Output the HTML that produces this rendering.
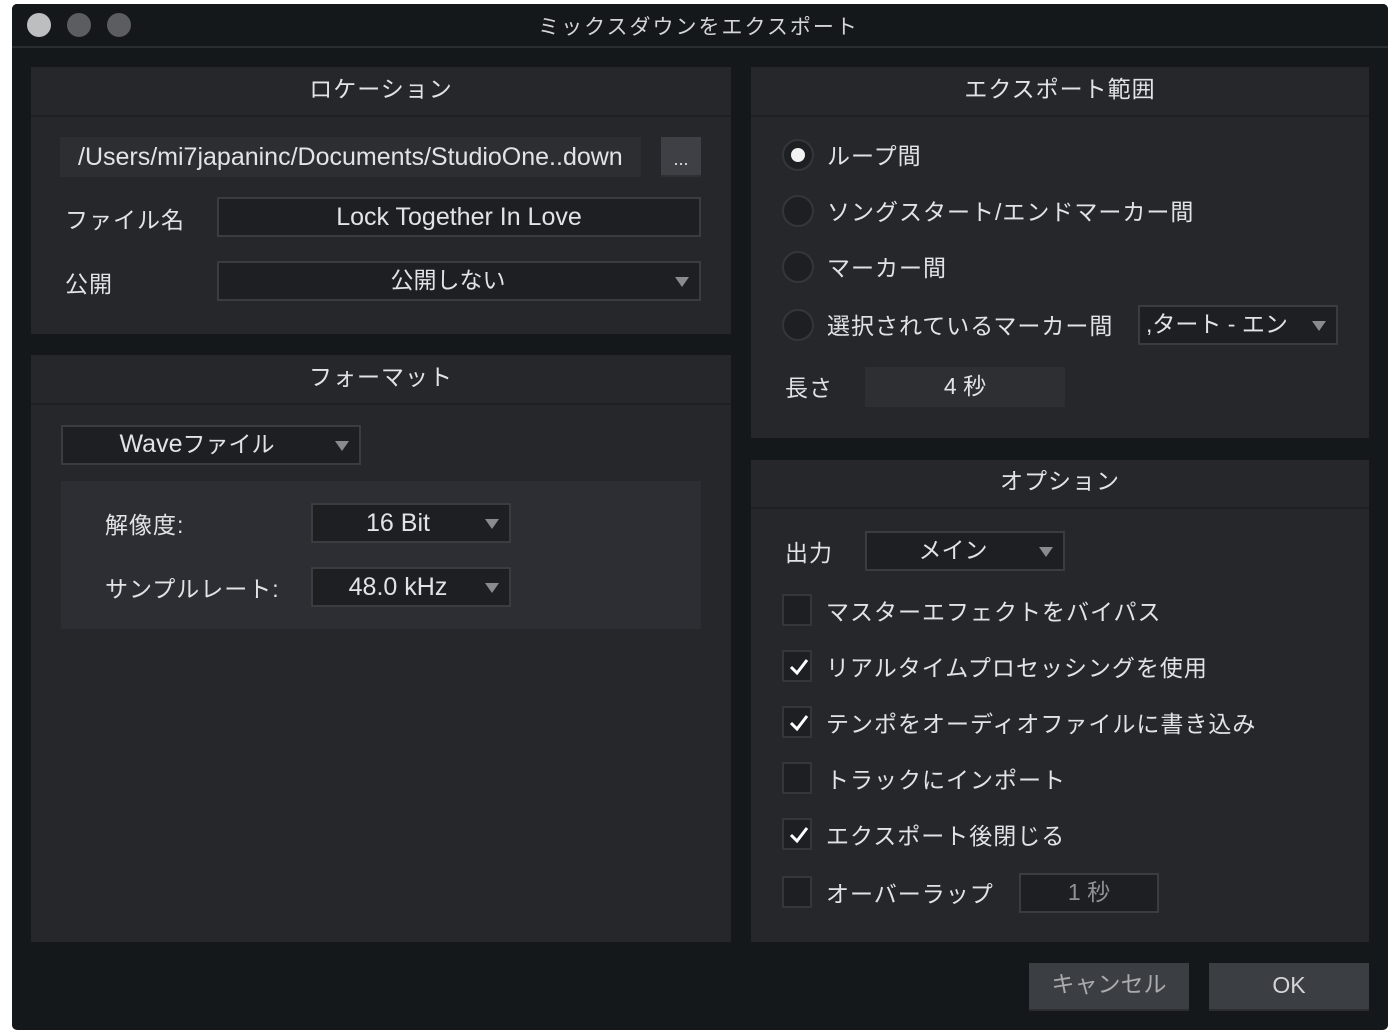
<!DOCTYPE html>
<html><head><meta charset="utf-8"><style>
*{margin:0;padding:0;box-sizing:border-box}
body{width:1397px;height:1036px;background:#fff;font-family:"Liberation Sans","Noto Sans CJK JP",sans-serif;color:#e2e3e4;overflow:hidden;position:relative}
.a{position:absolute}
.win{left:12px;top:4px;width:1376px;height:1026px;background:#15181b;border-radius:5px}
.tb{left:12px;top:4px;width:1376px;height:44px;border-bottom:2px solid #2a2d31;border-radius:5px 5px 0 0;background:#15181b}
.dot{width:24px;height:24px;border-radius:50%;background:#5b5d60;top:13px}
.panel{background:#25272b}
.hd{font-size:23px;text-align:center;letter-spacing:1px;border-bottom:2px solid #1e2023}
.lbl{font-size:23px;letter-spacing:1px}
.inp{background:#1d1f23;border:2px solid #3a3c40;font-size:23px;text-align:center}
.L{font-size:25px;letter-spacing:0}
.tri{position:absolute;right:10px;top:50%;margin-top:-4px;width:0;height:0;border-left:7px solid transparent;border-right:7px solid transparent;border-top:10px solid #8a8b8d}
.rad{width:32px;height:32px;border-radius:50%;background:#1d1f23;border:2px solid #34363a}
.cb{width:30px;height:32px;background:#1d1f23;border:2px solid #34363a}
.cb svg{position:absolute;left:4px;top:5px}
.btn{background:#3b3e43;font-size:23px;text-align:center;border-bottom:2px solid #2c2e32}
</style></head><body>
<div class="a win"></div>
<div class="a tb"></div>
<div class="a dot" style="left:27px;background:#bdbec0"></div>
<div class="a dot" style="left:67px"></div>
<div class="a dot" style="left:107px"></div>
<div class="a" style="left:0;width:1397px;top:11px;text-align:center;font-size:21px;letter-spacing:2px;color:#d4d5d6">ミックスダウンをエクスポート</div>

<!-- Location -->
<div class="a panel" style="left:31px;top:67px;width:700px;height:267px"></div>
<div class="a hd" style="left:31px;top:67px;width:700px;height:50px;line-height:44px">ロケーション</div>
<div class="a L" style="left:60px;top:137px;width:581px;height:40px;background:#2c2e32;line-height:40px;padding-left:18px">/Users/mi7japaninc/Documents/StudioOne..down</div>
<div class="a" style="left:661px;top:137px;width:40px;height:40px;background:#3e4045;border-bottom:2px solid #2e3034;font-size:18px;text-align:center;line-height:44px">...</div>
<div class="a lbl" style="left:65px;top:201px">ファイル名</div>
<div class="a inp L" style="left:217px;top:197px;width:484px;height:40px;line-height:36px">Lock Together In Love</div>
<div class="a lbl" style="left:65px;top:265px">公開</div>
<div class="a inp" style="left:217px;top:261px;width:484px;height:40px;line-height:34px;padding-right:22px">公開しない<span class="tri"></span></div>

<!-- Format -->
<div class="a panel" style="left:31px;top:355px;width:700px;height:587px"></div>
<div class="a hd" style="left:31px;top:355px;width:700px;height:50px;line-height:44px">フォーマット</div>
<div class="a inp" style="left:61px;top:425px;width:300px;height:40px;line-height:34px;padding-right:28px"><span class="L">Wave</span>ファイル<span class="tri"></span></div>
<div class="a" style="left:61px;top:481px;width:640px;height:148px;background:#2c2e33"></div>
<div class="a lbl" style="left:105px;top:506px">解像度:</div>
<div class="a inp L" style="left:311px;top:503px;width:200px;height:40px;line-height:36px;padding-right:26px">16 Bit<span class="tri"></span></div>
<div class="a lbl" style="left:105px;top:570px">サンプルレート:</div>
<div class="a inp L" style="left:311px;top:567px;width:200px;height:40px;line-height:36px;padding-right:26px">48.0 kHz<span class="tri"></span></div>

<!-- Export range -->
<div class="a panel" style="left:751px;top:67px;width:618px;height:371px"></div>
<div class="a hd" style="left:751px;top:67px;width:618px;height:50px;line-height:44px">エクスポート範囲</div>
<div class="a rad" style="left:782px;top:139px"></div>
<div class="a" style="left:791px;top:148px;width:14px;height:14px;border-radius:50%;background:#f2f2f2"></div>
<div class="a lbl" style="left:827px;top:137px">ループ間</div>
<div class="a rad" style="left:782px;top:195px"></div>
<div class="a lbl" style="left:827px;top:193px">ソングスタート/エンドマーカー間</div>
<div class="a rad" style="left:782px;top:251px"></div>
<div class="a lbl" style="left:827px;top:249px">マーカー間</div>
<div class="a rad" style="left:782px;top:309px"></div>
<div class="a lbl" style="left:827px;top:307px">選択されているマーカー間</div>
<div class="a inp" style="left:1138px;top:305px;width:200px;height:40px;line-height:34px;text-align:left;padding-left:6px">,タート - エン<span class="tri"></span></div>
<div class="a lbl" style="left:785px;top:369px">長さ</div>
<div class="a" style="left:865px;top:367px;width:200px;height:40px;background:#2d2f33;font-size:23px;text-align:center;line-height:38px">4 秒</div>

<!-- Options -->
<div class="a panel" style="left:751px;top:460px;width:618px;height:482px"></div>
<div class="a hd" style="left:751px;top:460px;width:618px;height:49px;line-height:42px">オプション</div>
<div class="a lbl" style="left:785px;top:534px">出力</div>
<div class="a inp" style="left:865px;top:531px;width:200px;height:40px;line-height:34px;padding-right:24px">メイン<span class="tri"></span></div>

<div class="a cb" style="left:782px;top:594px"></div>
<div class="a lbl" style="left:826px;top:593px">マスターエフェクトをバイパス</div>
<div class="a cb" style="left:782px;top:650px"><svg width="22" height="20"><path d="M3 10 L9 16 L19 3" stroke="#fff" stroke-width="3" fill="none"/></svg></div>
<div class="a lbl" style="left:826px;top:649px">リアルタイムプロセッシングを使用</div>
<div class="a cb" style="left:782px;top:706px"><svg width="22" height="20"><path d="M3 10 L9 16 L19 3" stroke="#fff" stroke-width="3" fill="none"/></svg></div>
<div class="a lbl" style="left:826px;top:705px">テンポをオーディオファイルに書き込み</div>
<div class="a cb" style="left:782px;top:762px"></div>
<div class="a lbl" style="left:826px;top:761px">トラックにインポート</div>
<div class="a cb" style="left:782px;top:818px"><svg width="22" height="20"><path d="M3 10 L9 16 L19 3" stroke="#fff" stroke-width="3" fill="none"/></svg></div>
<div class="a lbl" style="left:826px;top:817px">エクスポート後閉じる</div>
<div class="a cb" style="left:782px;top:876px"></div>
<div class="a lbl" style="left:826px;top:875px">オーバーラップ</div>
<div class="a inp" style="left:1019px;top:873px;width:140px;height:40px;line-height:34px;color:#8f9194">1 秒</div>

<div class="a btn" style="left:1029px;top:963px;width:160px;height:48px;line-height:42px;color:#a9abad">キャンセル</div>
<div class="a btn L" style="left:1209px;top:963px;width:160px;height:48px;line-height:44px;color:#d4d5d6">OK</div>
</body></html>
